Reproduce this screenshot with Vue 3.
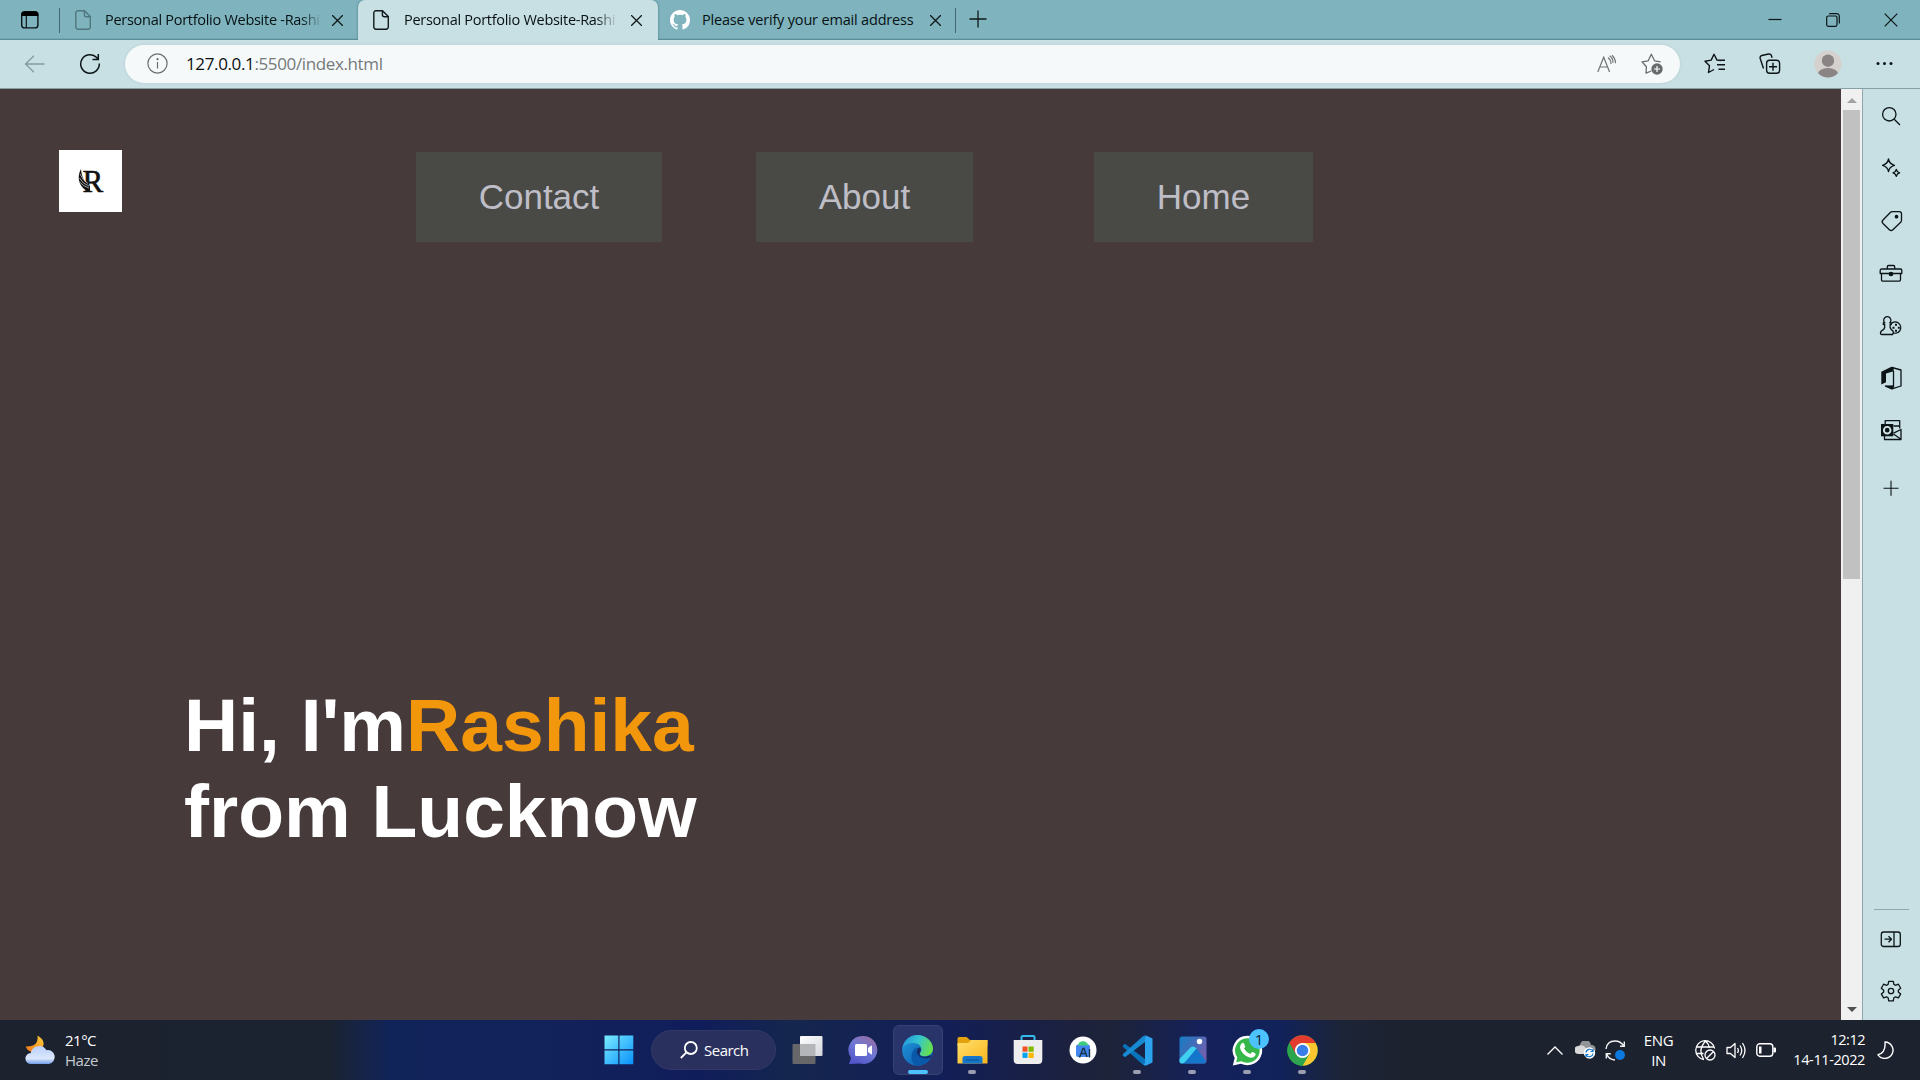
<script setup>
const navItems = [
  { label: 'Contact', cls: 'contact' },
  { label: 'About', cls: 'about' },
  { label: 'Home', cls: 'home' },
]
</script>

<template>
  <div class="desktop">
    <header class="tabstrip">
      <div class="actions">
        <svg width="20" height="20" viewBox="0 0 20 20"><rect x="1.7" y="1.7" width="16.2" height="16.2" rx="3" fill="none" stroke="#0b1517" stroke-width="1.4"/><path d="M1.5 6V4.5a3 3 0 0 1 3-3h10.8a3 3 0 0 1 3 3V6z" fill="#000"/><path d="M6.3 6v12" stroke="#0b1517" stroke-width="1.2"/></svg>
      </div>
      <i class="sep"></i>
      <div class="tab first">
        <svg class="page dim" viewBox="0 0 16 20"><path d="M3 .7h6.5l5.8 5.8V17a2.2 2.2 0 0 1-2.2 2.2H3A2.2 2.2 0 0 1 .8 17V3A2.2 2.2 0 0 1 3 .7zM9.4.8v4a2 2 0 0 0 2 2h3.9"/></svg>
        <span class="title fade t1">Personal Portfolio Website -Rashi</span>
        <svg class="x" viewBox="0 0 10 10"><path d="M0 0l10 10M10 0L0 10"/></svg>
      </div>
      <div class="tab active">
        <svg class="page" viewBox="0 0 16 20"><path d="M3 .7h6.5l5.8 5.8V17a2.2 2.2 0 0 1-2.2 2.2H3A2.2 2.2 0 0 1 .8 17V3A2.2 2.2 0 0 1 3 .7zM9.4.8v4a2 2 0 0 0 2 2h3.9"/></svg>
        <span class="title fade t2">Personal Portfolio Website-Rashi</span>
        <svg class="x" viewBox="0 0 10 10"><path d="M0 0l10 10M10 0L0 10"/></svg>
      </div>
      <div class="tab third">
        <svg class="gh" viewBox="0 0 16 16"><path fill="#fff" d="M8 0C3.58 0 0 3.58 0 8c0 3.54 2.29 6.53 5.47 7.59.4.07.55-.17.55-.38 0-.19-.01-.82-.01-1.49-2.01.37-2.53-.49-2.69-.94-.09-.23-.48-.94-.82-1.13-.28-.15-.68-.52-.01-.53.63-.01 1.08.58 1.23.82.72 1.21 1.87.87 2.33.66.07-.52.28-.87.51-1.07-1.78-.2-3.64-.89-3.64-3.95 0-.87.31-1.59.82-2.15-.08-.2-.36-1.02.08-2.12 0 0 .67-.21 2.2.82.64-.18 1.32-.27 2-.27s1.36.09 2 .27c1.53-1.04 2.2-.82 2.2-.82.44 1.1.16 1.92.08 2.12.51.56.82 1.27.82 2.15 0 3.07-1.87 3.75-3.65 3.95.29.25.54.73.54 1.48 0 1.07-.01 1.93-.01 2.2 0 .21.15.46.55.38A8.01 8.01 0 0 0 16 8c0-4.42-3.58-8-8-8z"/></svg>
        <span class="title t3">Please verify your email address</span>
        <svg class="x" viewBox="0 0 10 10"><path d="M0 0l10 10M10 0L0 10"/></svg>
      </div>
      <i class="sep"></i>
      <svg class="plus" viewBox="0 0 18 18"><path d="M9 .5v17M.5 9h17"/></svg>
      <div class="winbtns">
        <svg width="14" height="14" viewBox="0 0 14 14"><path d="M.5 6.500h13"/></svg>
        <svg width="14" height="14" viewBox="0 0 14 14"><rect x=".7" y="3" width="10.3" height="10.3" rx="1.5"/><path d="M3.2.7h7.6a2.5 2.5 0 0 1 2.5 2.5v7.3"/></svg>
        <svg width="14" height="14" viewBox="0 0 14 14"><path d="M.7.7l12.6 12.6M13.3.7L.7 13.3"/></svg>
      </div>
    </header>

    <div class="toolbar">
      <svg class="back" width="21" height="18" viewBox="0 0 21 18"><path d="M10 .8L1.5 9l8.500 8.200M1.500 9H20.500" fill="none" stroke="#829ba0" stroke-width="1.300"/></svg>
      <svg class="reload" width="22" height="22" viewBox="0 0 22 22"><path d="M20.300 10.500A9.300 9.300 0 1 1 17.700 4.500L19 6M19.300 1v5.500H13.500" fill="none" stroke="#0b1517" stroke-width="1.500"/></svg>
      <div class="address">
        <svg class="info" width="21" height="21" viewBox="0 0 21 21" fill="none" stroke="#6b6e6f" stroke-width="1.200"><circle cx="10.500" cy="10.500" r="9.600"/><path d="M10.500 9v6.500"/><circle cx="10.500" cy="6.200" r=".5" fill="#6b6e6f"/></svg>
        <span class="url"><b>127.0.0.1</b>:5500/index.html</span>
        <svg class="read" width="20" height="18" viewBox="0 0 20 18" fill="none" stroke="#707577" stroke-width="1.200"><path d="M.8 17L6.700 2.200 12.600 17M2.900 12h7.600M11 2.500a8 8 0 0 1 3 6.500M12.600.7q3.500 2.500 3.400 7M15 .2q3.500 3.300 3.500 8"/></svg>
        <svg class="fav" width="22" height="22" viewBox="0 0 22 22"><path d="M10.300 18L5 20.200l.4-6.400L1 8.800l6.200-1L10.300 1.300l3.300 6.500 6 1" fill="none" stroke="#6b6e6f" stroke-width="1.300" stroke-linejoin="round"/><circle cx="16" cy="16" r="5.700" fill="#666b6d"/><path d="M16 13v6M13 16h6" stroke="#fff" stroke-width="1.200"/></svg>
      </div>
      <svg class="tb1" width="22" height="22" viewBox="0 0 22 22" fill="none" stroke="#0b1517" stroke-width="1.400" stroke-linejoin="round"><path d="M17 7.500l-4-.4L10 1.300 7.200 7.100 1 8.200l4.500 4.500L4.500 19.500l5.500-3M13 7.300h8M13 11.800h8M14.500 16.300H21"/></svg>
      <svg class="tb2" width="22" height="22" viewBox="0 0 22 22" fill="none" stroke="#0b1517" stroke-width="1.400"><path d="M4.500 15.500L1.200 5.500a2.500 2.500 0 0 1 1.600-3L9.500 1q2.300-.3 3 1.800l.6 1.900"/><rect x="7.600" y="7.200" width="13" height="13" rx="3"/><path d="M14 9.800v8M10 13.800h8"/></svg>
      <svg class="avatar" width="28" height="28" viewBox="0 0 28 28"><defs><clipPath id="av"><circle cx="14" cy="14" r="13.500"/></clipPath></defs><circle cx="14" cy="14" r="13.500" fill="#d4d1ce"/><g clip-path="url(#av)" fill="#8a8584"><circle cx="14" cy="10.700" r="6.200"/><ellipse cx="14" cy="25" rx="10.500" ry="7"/></g></svg>
      <svg class="dots" width="17" height="5" viewBox="0 0 17 5" fill="#0b1517"><circle cx="2" cy="2.500" r="1.500"/><circle cx="8.500" cy="2.500" r="1.500"/><circle cx="15" cy="2.500" r="1.500"/></svg>
    </div>

    <div class="body">
      <main class="page-view">
        <nav class="nav">
          <div class="logo">
            <svg width="26" height="26" viewBox="0 0 26 26"><text x="4.500" y="23.500" class="logo-r">R</text><path d="M3 1C-1 8 0 17 8 22.500L6.500 24H12V18C6 14 3.500 8 3 1Z" fill="#111"/><path d="M1.500 10q3 6 9.500 8M1.500 14q4 4.500 9.500 6M2 6q3 7 8 9.500" stroke="#fff" stroke-width=".6" fill="none"/></svg>
          </div>
          <a v-for="n in navItems" :key="n.label" :class="n.cls">{{ n.label }}</a>
        </nav>
        <h1>Hi, I'm<span>Rashika</span><br>from Lucknow</h1>
      </main>
      <div class="scroll">
        <svg width="10" height="5" viewBox="0 0 10 5"><path d="M0 5L5 0l5 5z" fill="#a3a3a3"/></svg>
        <div class="thumb"></div>
        <svg class="down" width="10" height="5" viewBox="0 0 10 5"><path d="M0 0l5 5 5-5z" fill="#505050"/></svg>
      </div>
      <aside class="side">
        <svg viewBox="0 0 24 24"><circle cx="10.300" cy="10.300" r="6.700"/><path d="M15.200 15.200l5.800 5.800"/></svg>
        <svg viewBox="0 0 24 24"><path d="M9.500 3q1 5 6 6.300-5 1.200-6 6.200-1-5-6-6.200 5-1.300 6-6.300zM17.300 13.500q.7 2.700 3.300 3.400-2.600.7-3.300 3.400-.7-2.700-3.300-3.400 2.600-.7 3.300-3.400z"/></svg>
        <svg viewBox="0 0 24 24"><path d="M13.300 2.700h7.200a2 2 0 0 1 2 2v6.500a3 3 0 0 1-.8 2l-7.800 7.500a2.500 2.500 0 0 1-3.500 0L4 14.500a2.500 2.500 0 0 1 0-3.500l7.300-7.500a3 3 0 0 1 2-.8z"/><circle cx="17.500" cy="7.700" r="1.200" fill="#0b1517"/></svg>
        <svg viewBox="0 0 24 24"><path d="M8.300 8V5.700a1.200 1.200 0 0 1 1.200-1.200h5a1.200 1.200 0 0 1 1.200 1.200V8M2.500 8h19a1.300 1.300 0 0 1 1.300 1.300v3.200H1.200V9.300A1.300 1.300 0 0 1 2.500 8zM2.500 13v5.800a1.300 1.300 0 0 0 1.300 1.300h16.400a1.300 1.300 0 0 0 1.300-1.300V13"/><circle cx="12" cy="13" r="1.700" fill="#0b1517"/></svg>
        <svg viewBox="0 0 24 24"><path d="M14 20.500H2.800q-1.300 0-1.300-1.500 0-2 3-3.300 1.700-1.500 1.200-5.200H4.300V8.800h1.500a3.600 3.600 0 1 1 5 0h1.500v1.700h-1.200q-.4 3.700 1.200 5.200 2 1 2 2.500 0 2.300-1.500 2.300M12.300 9.500a5.600 5.600 0 1 1 1.500 9.200"/><path d="M17 9.700v2M17 15.700v2M13.500 13.800h2M18.800 13.800h2" stroke-width="2"/></svg>
        <svg viewBox="0 0 24 24"><path d="M13 1.500l9 2.500v16l-9 2.800-6.500-2.700 8 .7V5"/><path d="M12.500.700L14.700 1.500V5.200L7 7.500v8.800l-4.700 2.200V5.800zM6 19.700l8.500-.5V22.500l-1.800.8z" fill="#0b1517" stroke="none"/></svg>
        <svg viewBox="0 0 24 24"><path d="M6.200 6V2.600h14.500v8M5.500 18v3.500h16.500V11.500l-7.500 3.700M14.500 8h6M14.500 16l7.500 5.300"/><rect x="2" y="6" width="12.300" height="12.300" fill="#0b1517" stroke="none"/><circle cx="8.200" cy="12.200" r="3.300" stroke="#d4e5e8" stroke-width="1.900"/></svg>
        <svg class="add" viewBox="0 0 24 24"><path d="M12 4.700v15M4.500 12.200h15" stroke-width="1.100"/></svg>
        <i class="rule"></i>
        <svg class="panel" viewBox="0 0 24 24"><rect x="2.300" y="5" width="19" height="14.500" rx="2.300"/><path d="M15 5v14.500M5.500 12.200h7M9.500 9.200l3 3-3 3"/></svg>
        <svg class="gear" viewBox="0 0 24 24"><path d="M9.700 2.300h4.600l.6 3.100 1.500.9 3-1.100 2.300 4-2.400 2v1.700l2.400 2-2.300 4-3-1.100-1.500.9-.6 3.100H9.700l-.6-3.100-1.500-.9-3 1.100-2.300-4 2.400-2v-1.700l-2.400-2 2.300-4 3 1.100 1.500-.9z"/><circle cx="12" cy="12" r="2.700"/></svg>
      </aside>
    </div>

    <footer class="taskbar">
      <div class="weather">
        <svg width="31" height="30" viewBox="0 0 31 30"><defs><linearGradient id="mo" x1="1" y1="0" x2="0" y2="1"><stop stop-color="#ffd13d"/><stop offset="1" stop-color="#f27416"/></linearGradient><linearGradient id="cl" x1="0" y1="0" x2="0" y2="1"><stop stop-color="#b9d0fb"/><stop offset=".7" stop-color="#dce7fb"/><stop offset="1" stop-color="#6f9ee8"/></linearGradient></defs><path d="M12.500.5Q23 7 15.500 15L6.500 17Q2 15.500.7 11.500 14 12 12.500.5z" fill="url(#mo)"/><path d="M6 29a5.500 5.500 0 0 1-.2-11A8.500 8.500 0 0 1 21.500 15.200 7 7 0 1 1 24 29z" fill="url(#cl)"/></svg>
        <div class="wtext"><span>21°C</span><span class="haze">Haze</span></div>
      </div>

      <div class="apps">
        <div class="app start"><svg width="30" height="30" viewBox="0 0 30 30"><defs><linearGradient id="wi" x1="0" y1="0" x2="1" y2="1"><stop stop-color="#7cecff"/><stop offset="1" stop-color="#0791fa"/></linearGradient></defs><path d="M.5.500h13.800v13.800H.5zM15.500.5h13.800v13.800H15.500zM.5 15.500h13.800v13.800H.5zM15.500 15.500h13.800v13.800H15.500z" fill="url(#wi)"/></svg></div>
        <div class="search"><svg width="18" height="18" viewBox="0 0 18 18" fill="none" stroke="#fff" stroke-width="1.800"><circle cx="10.800" cy="7" r="6"/><path d="M6.500 11.300L.8 17"/></svg><span>Search</span></div>
        <div class="app taskview"><svg width="31" height="30" viewBox="0 0 31 30"><defs><linearGradient id="tv" x1="0" y1="0" x2="1" y2="1"><stop stop-color="#fff"/><stop offset="1" stop-color="#d3d6dc"/></linearGradient></defs><rect x=".5" y="9" width="23" height="20" rx="1" fill="#67676a"/><rect x="8" y="1" width="22.500" height="20" rx="1" fill="url(#tv)"/><path d="M8 9h15.500v12H8z" fill="#b4b5b8"/></svg></div>
        <div class="app"><svg width="30" height="30" viewBox="0 0 30 30"><defs><linearGradient id="te" x1=".9" y1="0" x2=".3" y2="1"><stop stop-color="#9a6b9f"/><stop offset=".5" stop-color="#6f79d4"/><stop offset="1" stop-color="#5355ca"/></linearGradient></defs><path d="M15 1a14 14 0 1 1-3 27.600L1 29l2-6A14 14 0 0 1 15 1z" fill="url(#te)"/><rect x="7" y="9" width="12" height="12" rx="1.500" fill="#fff"/><path d="M20 13l3.500-2.500q.5-.3.500.5v8q0 .8-.5.5L20 17z" fill="#fff"/></svg></div>
        <div class="app sel"><svg width="31" height="31" viewBox="0 0 32 32"><defs><linearGradient id="e1" x1="0" y1=".2" x2="1" y2=".5"><stop stop-color="#2292dc"/><stop offset=".5" stop-color="#35c5cf"/><stop offset="1" stop-color="#68e04a"/></linearGradient><linearGradient id="e2" x1="0" y1="0" x2="1" y2="1"><stop stop-color="#2499df"/><stop offset="1" stop-color="#0754a6"/></linearGradient></defs><circle cx="16" cy="16" r="15.800" fill="url(#e2)"/><path d="M.3 14C2 4 9 0 16 0c9 0 16 7 16 14 0 5-4 8-8.500 8-4 0-6-2-5-3.500 2-2 2-5 .5-7C16 7 5 7 .3 14z" fill="url(#e1)"/><path d="M17.500 20c1 3 7 4 12.500 1q-4 9-14 10.800C8 30 8 17 15 12.500q-1 4.500 2.500 7.500z" fill="#0a58a9"/><path d="M18.500 18.500Q17 20.500 21 22.200q5 1 9.500-1.200l-1 2.500q-6 2-11-1-5-4-2.500-8.500 1-1.500 3-1 1.500 3-.5 5.500z" fill="#162a65"/></svg><i class="run blue"></i></div>
        <div class="app"><svg width="31" height="30" viewBox="0 0 31 30"><defs><linearGradient id="fo" x1="0" y1="0" x2="1" y2="1"><stop stop-color="#ffe06c"/><stop offset="1" stop-color="#fbb51d"/></linearGradient></defs><path d="M.5 9V3.500A1.500 1.500 0 0 1 2 2h7.500l3.500 3h17.500v6H.5z" fill="#e3a10b"/><path d="M.5 8H11l3-3h16.500v23.500H.5z" fill="url(#fo)"/><path d="M5.500 28.500v-5q0-2.500 2.500-2.500h15q2.500 0 2.500 2.500v5z" fill="#1676c9"/><path d="M9 25h13" stroke="#07518d"/></svg><i class="run"></i></div>
        <div class="app"><svg width="30" height="30" viewBox="0 0 30 30"><path d="M8.500 6V2.300A1.300 1.300 0 0 1 9.800 1h10.400a1.300 1.300 0 0 1 1.300 1.300V6" fill="none" stroke="#35bceb" stroke-width="2"/><path d="M.7 5h28.600v20a4 4 0 0 1-4 4H4.700a4 4 0 0 1-4-4z" fill="#eeeeef"/><path d="M9.500 11.500H14.500v5.200H9.500z" fill="#f05125"/><path d="M15.500 11.500h5.200v5.200h-5.200z" fill="#7eba00"/><path d="M9.500 17.700H14.500v5.200H9.500z" fill="#00a3ef"/><path d="M15.500 17.700h5.200v5.200h-5.200z" fill="#fdb900"/></svg></div>
        <div class="app"><svg width="28" height="28" viewBox="0 0 28 28"><circle cx="14" cy="14" r="13.500" fill="#fff"/><rect x="7" y="8.500" width="14" height="12.500" rx="2" fill="#4386ef"/><path d="M9 9.500a5 4.200 0 0 1 10 0z" fill="#3ccb7f"/><path d="M10.500 21.500l3.500-9h1l3 8.500M12 17.500h5M20.500 13v8.500" fill="none" stroke="#173348" stroke-width="1.400"/></svg></div>
        <div class="app"><svg width="31" height="31" viewBox="0 0 31 31"><path d="M.7 10.500L3 8.800 23 24v6.500l-2-.8L1 12z" fill="#0873bb"/><path d="M.7 20.500L3 22.200 23 7V.5l-2 .8L1 19z" fill="#168bd3"/><path d="M23.500.3l7 3.200v24l-7 3.200-2-1.200L23 28V3z" fill="#2ba3ef"/></svg><i class="run"></i></div>
        <div class="app"><svg width="28" height="28" viewBox="0 0 28 28"><defs><linearGradient id="ph" x1="0" y1="0" x2="1" y2=".6"><stop stop-color="#147bc4"/><stop offset="1" stop-color="#7160ae"/></linearGradient></defs><rect x=".5" y=".5" width="27" height="27" rx="2.500" fill="url(#ph)"/><path d="M1.500 26.500L12 12q2.500-2.500 5 0l10 13v.5a2 2 0 0 1-2 2H3z" fill="#1477cc"/><path d="M.5 23L11.500 11.500q3-2.300 6 1L6.500 25.500Q5 27.500 2.500 27.500a2 2 0 0 1-2-2z" fill="#3fd0f1"/><circle cx="20.500" cy="5.500" r="2.700" fill="#fff"/></svg><i class="run"></i></div>
        <div class="app"><svg width="31" height="31" viewBox="0 0 31 31"><path d="M15.500.8A14.700 14.700 0 1 1 9 28.700L.8 30.500 2.700 23A14.700 14.700 0 0 1 15.500.8z" fill="#fff"/><path d="M15.500 3.200A12.300 12.300 0 1 1 9.300 26.200L4.200 27.300 5.300 22.500A12.300 12.300 0 0 1 15.500 3.200z" fill="#35b849"/><path d="M10 8q1-.7 2 .5l1.200 2.700q.2.800-1.200 2.300 2.200 4 6.200 5.500l1.600-1.800q.5-.5 3.500 1.200.7.500 0 2-2 3-5.500 2.200C12 21 8.500 16 8 12.500Q8 9.500 10 8z" fill="#fff"/></svg><b class="badge">1</b><i class="run"></i></div>
        <div class="app"><svg width="31" height="31" viewBox="0 0 32 32"><circle cx="16" cy="16" r="15.700" fill="#2da44e"/><path d="M2.400 8.200A15.700 15.700 0 0 1 29.600 8.200H16z" fill="#e33b2e"/><path d="M2.400 8.200L9.300 20 16 8.200l-3-6z" fill="#e33b2e"/><path d="M29.600 8.200A15.700 15.700 0 0 1 16 31.700L22.800 20 16 8.200z" fill="#fdc72f"/><path d="M2.400 8.200A15.700 15.700 0 0 0 16 31.700L22.500 20H9.300z" fill="#2da44e"/><circle cx="16" cy="16" r="7.800" fill="#fff"/><circle cx="16" cy="16" r="6" fill="#3a7ee9"/></svg><i class="run"></i></div>
      </div>

      <div class="tray">
        <svg class="chev" width="16" height="9" viewBox="0 0 16 9" fill="none" stroke="#fff" stroke-width="1.300"><path d="M.5 8.500L8 1l7.500 7.500"/></svg>
        <svg class="cloud" width="21" height="18" viewBox="0 0 21 18"><path d="M5 5a5.500 5.500 0 0 1 11-1 4 4 0 0 1 1 8H8z" fill="#929396"/><path d="M4 13A4 4 0 0 1 3 5q4-2 7 1l6 6v1z" fill="#d9d9da"/><circle cx="14.500" cy="12" r="5.700" fill="#fff"/><path d="M11 11.500a3.700 3.700 0 0 1 6.800-1.500M18 12.500a3.700 3.700 0 0 1-6.800 1.500M18 8v2.500h-2.500M11 16v-2.500h2.500" fill="none" stroke="#1175ca" stroke-width="1.200"/></svg>
        <svg class="sync" width="21" height="21" viewBox="0 0 21 21"><path d="M1 9Q2 1 10 1q5.500 0 9 5M19.300 1.500V6.200H15M10 20Q3.500 19.500 1.500 13.500M1.300 18.500V13.700H5.800" fill="none" stroke="#f0f1f2" stroke-width="1.400"/><circle cx="15" cy="15" r="5" fill="#0b79df"/></svg>
        <div class="lang"><span>ENG</span><span>IN</span></div>
        <svg class="globe" width="21" height="21" viewBox="0 0 21 21" fill="none" stroke="#fff" stroke-width="1.300"><path d="M19.600 8.500A9.500 9.500 0 1 0 9 19.600M1.500 7h17.500M1.500 13.500H8.500M8.500 19q-6-9 2-18M10.500 1q3.500 3 3.700 7"/><circle cx="15" cy="15" r="5"/><path d="M11.800 18.200l6.500-6.500"/></svg>
        <svg class="vol" width="20" height="17" viewBox="0 0 20 17" fill="none" stroke="#fff" stroke-width="1.300" stroke-linejoin="round"><path d="M1 5.500h3.500L9 1.500v14l-4.500-4H1zM11.500 6q1.700 2.500 0 5M14 3.500q3.500 5 0 10M16.500 1q5 7.500 0 15"/></svg>
        <svg class="batt" width="20" height="14" viewBox="0 0 20 14"><rect x=".8" y=".8" width="16" height="12.400" rx="3" fill="none" stroke="#fff" stroke-width="1.400"/><path d="M3 3.500h2.500v7H3zM17.500 4.500H19a1 1 0 0 1 1 1v3a1 1 0 0 1-1 1h-1.500z" fill="#fff"/></svg>
        <div class="clock"><span class="time">12:12</span><span class="date">14-11-2022</span></div>
        <svg class="moon" width="17" height="18" viewBox="0 0 17 18" fill="none" stroke="#fff" stroke-width="1.400" stroke-linejoin="round"><path d="M8 1a8.200 8.200 0 1 1-7 12.800Q9 12 8 1z"/></svg>
      </div>
    </footer>
  </div>
</template>

<style>
html, body { margin: 0; overflow: hidden; }
</style>

<style scoped>
* { box-sizing: border-box; }
svg { display: block; flex: none; }
.desktop { width: 1920px; height: 1080px; display: flex; flex-direction: column; overflow: hidden; font-family: "Open Sans", "Noto Sans", sans-serif; }
.tabstrip { height: 40px; flex: none; background: #7fb4be; display: flex; align-items: flex-start; box-shadow: inset 0 -1px #5c8f99, inset 0 -2px #72a6b0; }
.actions { width: 59px; padding: 10px 0 0 20px; }
.sep { width: 1px; height: 25px; margin-top: 8px; background: #42696f; flex: none; }
.tab { height: 40px; display: flex; align-items: flex-start; position: relative; flex: none; }
.first { width: 298px; padding-left: 15px; }
.active { width: 300px; padding-left: 15px; background: #c8dfe3; border-radius: 7px 7px 0 0; box-shadow: 0 0 3px #4f7e87; clip-path: inset(0 -4px 0 -4px); }
.third { width: 297px; padding-left: 12px; }
.page { width: 16px; height: 20px; margin-top: 10px; fill: none; stroke: #11191a; stroke-width: 1.4; }
.dim { stroke: #51777e; }
.gh { width: 20px; height: 20px; margin-top: 10px; }
.title { font-size: 14.500px; line-height: 20px; margin: 10px 0 0 14px; white-space: nowrap; color: #071113; }
.t1, .t2 { margin-left: 14px; letter-spacing: -.28px; }
.t2 { margin-left: 15px; }
.t3 { margin-left: 12px; letter-spacing: -.18px; }
.fade { -webkit-mask-image: linear-gradient(90deg, #000 91%, transparent 101%); mask-image: linear-gradient(90deg, #000 91%, transparent 101%); }
.x { width: 11px; height: 11px; position: absolute; top: 15px; right: 15px; stroke: #11191a; stroke-width: 1.2; }
.active .x { right: 16px; }
.third .x { right: 14px; }
.plus { width: 18px; height: 18px; margin: 10px 0 0 13px; stroke: #101819; stroke-width: 1.3; }
.winbtns { margin-left: auto; display: flex; gap: 44px; padding: 13px 22px 0 0; }
.winbtns svg { fill: none; stroke: #0b1517; stroke-width: 1.2; }
.toolbar { height: 49px; flex: none; background: #c8dfe3; border-bottom: 1px solid #869fa5; display: flex; align-items: center; padding: 0 0 1px 24px; }
.reload { margin-left: 34px; }
.address { margin-left: 24px; width: 1555px; height: 38px; border-radius: 19px; background: #f5f9fa; display: flex; align-items: center; padding-left: 22px; box-shadow: 0 0 3px #b5cdd2; }
.url { width: 1411px; margin-left: 18px; font-size: 17px; letter-spacing: -.37px; color: #767a7b; white-space: nowrap; }
.url b { font-weight: 400; color: #0b1011; }
.fav { margin-left: 24px; }
.tb1 { margin-left: 24px; }
.tb2 { margin-left: 33px; }
.avatar { margin-left: 33px; }
.dots { margin-left: 34px; }
.body { flex: 1; min-height: 0; display: flex; background: #c8dfe3; }
.page-view { width: 1841px; background: #463a3a; font-family: "Liberation Sans", Arial, sans-serif; display: flex; flex-direction: column; }
.nav { display: flex; padding: 61px 0 0 59px; height: 153px; align-items: flex-start; }
.logo { width: 63px; height: 62px; background: #fff; display: flex; align-items: center; justify-content: center; }
.logo svg { overflow: visible; }
.logo-r { font: 31px "Liberation Serif", serif; fill: #111; stroke: #111; stroke-width: .6; }
.nav a { height: 90px; margin-top: 2px; background: #494a46; color: #bfbec6; font-size: 35px; line-height: 90px; text-align: center; }
.contact { width: 246px; margin-left: 294px; }
.about { width: 217px; margin-left: 94px; }
.home { width: 219px; margin-left: 121px; }
h1 { margin: 440px 0 0 184px; font-size: 75px; line-height: 86px; color: #fff; font-weight: 700; }
h1 span { color: #f2960b; }
.scroll { width: 22px; background: #f0f0f0; border-right: 1px solid #8fa6ab; display: flex; flex-direction: column; align-items: center; padding-top: 9px; }
.thumb { width: 17px; height: 469px; background: #c1c1c1; margin-top: 7px; }
.down { margin: auto 0 8px; }
.side { flex: 1; display: flex; flex-direction: column; align-items: center; padding: 15px 1px 0 0; }
.side svg { width: 24px; height: 24px; margin-bottom: 28.400px; fill: none; stroke: #0b1517; stroke-width: 1.300; stroke-linejoin: round; }
.side .add { margin-top: 5px; }
.rule { width: 35px; height: 1px; background: #8fa6ab; margin-top: auto; }
.side .panel { margin: 17px 0 28px; }
.side .gear { margin-bottom: 17px; }
.taskbar { height: 60px; flex: none; color: #fff; display: flex; background: linear-gradient(90deg, #1c222e 0, #1b2330 330px, #11245a 390px, #12215a 580px, #101d5b 700px, #15264e 790px, #121e57 940px, #1b2140 1060px, #1d2338 1110px, #15215a 1200px, #11225b 1280px, #1c2438 1340px, #1c222e 1400px); }
.weather { width: 598px; padding: 15px 0 0 25px; display: flex; }
.wtext { display: flex; flex-direction: column; margin: -5px 0 0 9px; font-size: 15px; line-height: 20px; letter-spacing: -.5px; }
.haze { color: #c7cad0; }
.apps { display: flex; height: 60px; align-items: center; gap: 5px; }
.app { width: 50px; height: 50px; display: flex; align-items: center; justify-content: center; position: relative; }
.app > svg { margin-right: 1px; }
.start { width: 43px; }
.search { width: 125px; height: 40px; border-radius: 20px; background: #29305e; border: 1px solid #323967; display: flex; align-items: center; padding-left: 28px; gap: 6px; font-size: 15px; letter-spacing: -.5px; margin: 0 2px 0 5px; }
.sel { background: #29356a; border: 1px solid #374273; border-radius: 6px; }
.run { position: absolute; left: 20px; bottom: 1px; width: 8px; height: 4px; border-radius: 2px; background: #9b9fb0; }
.blue { left: 14px; bottom: 0; width: 20px; background: #4cc2ff; }
.badge { position: absolute; right: 4px; top: 4px; width: 20px; height: 20px; border-radius: 50%; background: #4cc2ff; color: #0c202d; font: 15px/20px "Open Sans", sans-serif; text-align: center; }
.tray { margin-left: auto; display: flex; align-items: center; padding-right: 26px; }
.cloud { margin-left: 12px; }
.sync { margin-left: 9px; }
.lang { width: 31px; margin-left: 17px; display: flex; flex-direction: column; align-items: center; font-size: 15px; line-height: 20px; letter-spacing: -.4px; }
.globe { margin-left: 21px; }
.vol { margin-left: 10px; }
.batt { margin-left: 10px; }
.clock { width: 89px; display: flex; flex-direction: column; align-items: flex-end; font-size: 14.500px; line-height: 20px; letter-spacing: -.5px; white-space: nowrap; }
.date { letter-spacing: -.4px; }
.moon { margin-left: 12px; }
</style>
